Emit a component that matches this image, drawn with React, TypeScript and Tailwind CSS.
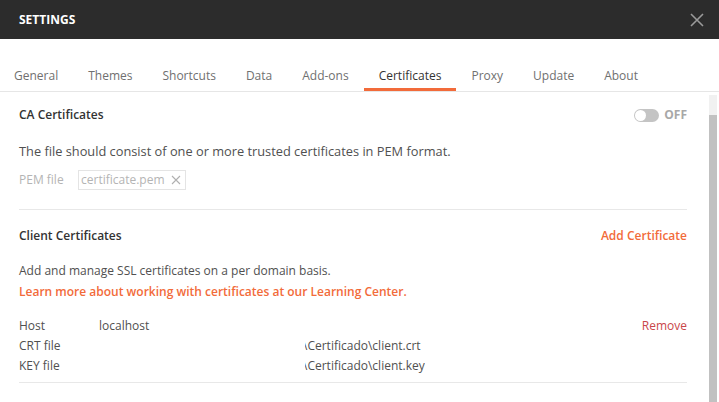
const tabs = [
  "General",
  "Themes",
  "Shortcuts",
  "Data",
  "Add-ons",
  "Certificates",
  "Proxy",
  "Update",
  "About",
];

const CloseIcon = () => (
  <svg width="14" height="14" viewBox="0 0 14 14" className="text-[#9a9a9a]">
    <path d="M1 1L13 13M13 1L1 13" stroke="currentColor" strokeWidth="1.6" />
  </svg>
);

const Toggle = () => (
  <div className="flex flex-row items-center gap-x-[5px]">
    <div className="flex h-[13px] w-[25px] items-center rounded-full bg-[#c4c4c4] px-[1px]">
      <div className="h-[11px] w-[11px] rounded-full bg-white" />
    </div>
    <span className="text-[12px] font-bold text-[#a8a8a8]">OFF</span>
  </div>
);

const FileRow = ({ label, value }: { label: string; value: string }) => (
  <div className="flex h-5 flex-row items-center">
    <span className="w-[80px]">{label}</span>
    <div className="ml-[206px] overflow-hidden">
      <span className="-ml-[2px] block whitespace-nowrap">{value}</span>
    </div>
  </div>
);

export default function App() {
  return (
    <div
      className="flex h-[402px] w-[719px] flex-col overflow-hidden bg-white text-[12px] text-[#505050]"
      style={{ fontFamily: '"Open Sans", sans-serif' }}
    >
      <div className="flex h-[39px] flex-row items-center justify-between bg-[#2c2c2c] pr-[15px] pl-[19px]">
        <span className="text-[12px] font-bold text-white">SETTINGS</span>
        <CloseIcon />
      </div>

      <div className="flex h-[53px] flex-row border-b border-[#e6e6e6]">
        {tabs.map((tab, i) => (
          <div
            key={tab}
            className={
              "flex flex-col justify-end px-[15px] text-[12px] " +
              (i === 0 ? "-ml-[1px] " : "") +
              (tab === "Certificates"
                ? "border-b-[3px] border-[#f26b3a] pb-[3px] text-[#333333]"
                : "pb-[6px] text-[#707070]")
            }
          >
            {tab}
          </div>
        ))}
      </div>

      <div className="flex flex-1 flex-row">
        <div className="flex w-[706px] flex-col pr-[19px] pl-[19px]">
          <div className="mt-[13px] flex h-5 flex-row items-center justify-between">
            <span className="font-semibold text-[#333333]">CA Certificates</span>
            <Toggle />
          </div>
          <p className="mt-[16px] text-[12.8px] leading-5">
            The file should consist of one or more trusted certificates in PEM format.
          </p>
          <div className="mt-[9px] flex flex-row items-center text-[#b4b4b4]">
            <span className="w-[59px]">PEM file</span>
            <div className="flex h-5 flex-row items-center gap-x-[6px] border border-[#e4e4e4] pr-[4px] pl-[2px]">
              <span>certificate.pem</span>
              <svg width="10" height="10" viewBox="0 0 10 10">
                <path d="M1 1L9 9M9 1L1 9" stroke="#b0b0b0" strokeWidth="1.1" />
              </svg>
            </div>
          </div>
          <div className="mt-[19px] border-t border-[#e8e8e8]" />

          <div className="mt-[16px] flex h-5 flex-row items-center justify-between">
            <span className="font-semibold text-[#333333]">Client Certificates</span>
            <span className="font-semibold text-[#f26b3a]">Add Certificate</span>
          </div>
          <p className="mt-[15px] leading-5">
            Add and manage SSL certificates on a per domain basis.
          </p>
          <p className="mt-[1px] leading-5 font-semibold text-[#f26b3a]">
            Learn more about working with certificates at our Learning Center.
          </p>

          <div className="mt-[14px] flex flex-col">
            <div className="flex h-5 flex-row items-center justify-between">
              <div className="flex flex-row">
                <span className="w-[80px]">Host</span>
                <span>localhost</span>
              </div>
              <span className="text-[#c9464a]">Remove</span>
            </div>
            <FileRow label="CRT file" value={"\\Certificado\\client.crt"} />
            <FileRow label="KEY file" value={"\\Certificado\\client.key"} />
          </div>
          <div className="mt-[6px] border-t border-[#e8e8e8]" />
        </div>

        <div className="mt-[3px] ml-[3px] flex w-[8px] flex-col bg-[#f1f1f1]">
          <div className="mt-[20px] flex-1 bg-[#c1c1c1]" />
        </div>
      </div>
    </div>
  );
}
